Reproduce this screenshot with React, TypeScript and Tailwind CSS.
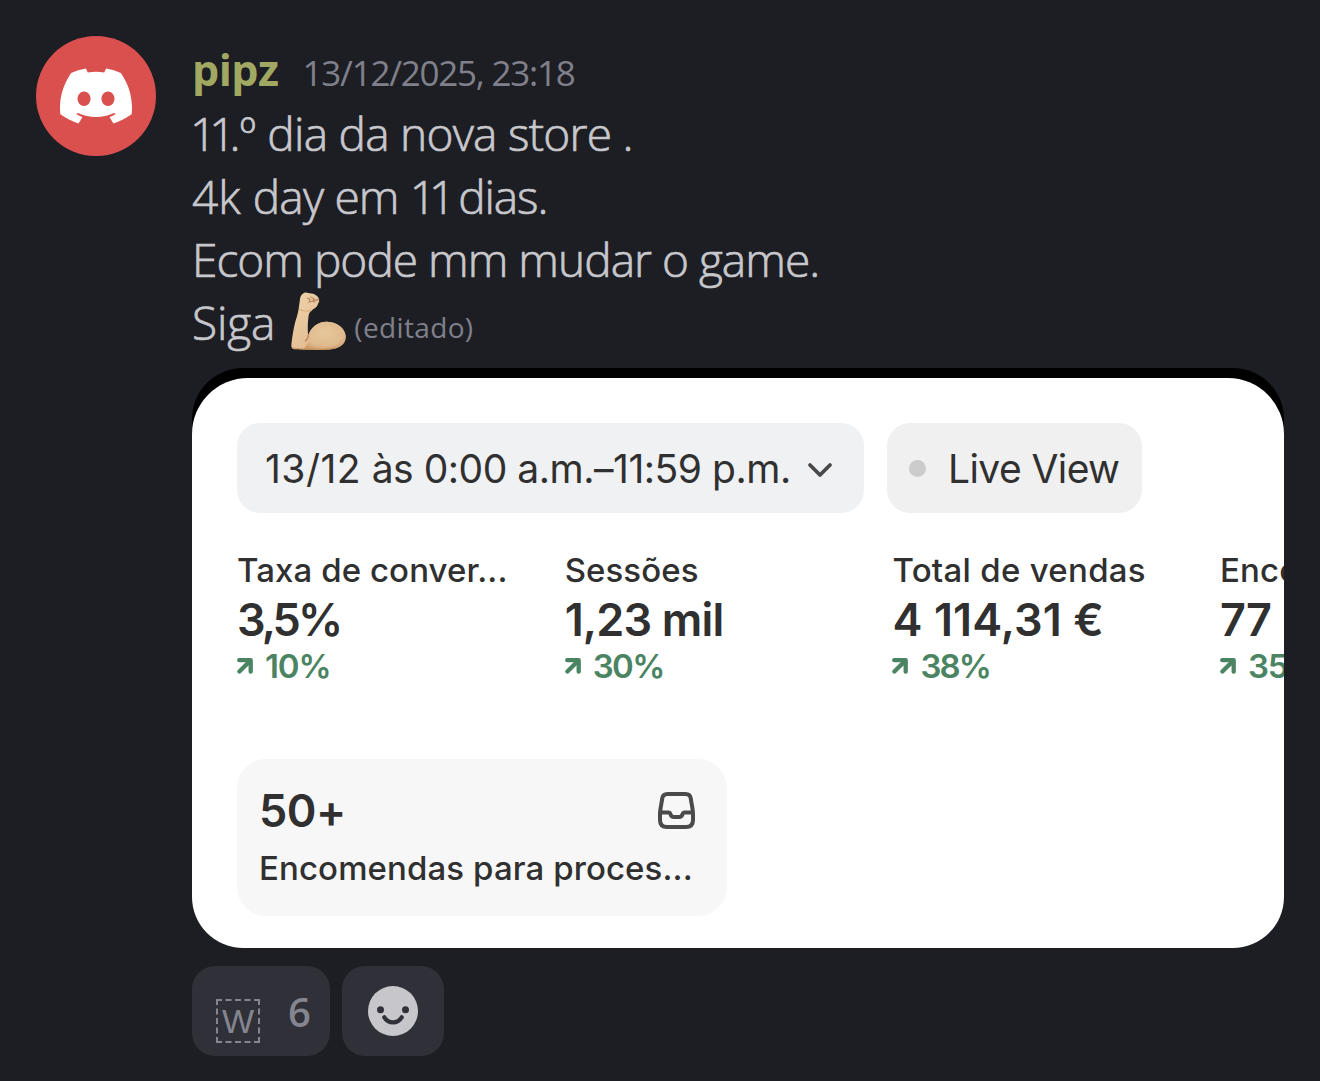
import React from "react";
import { SiDiscord } from "react-icons/si";

type Stat = { label: string; value: string; change: string; labelClass: string; valueClass: string; changeClass: string };

const stats: Stat[] = [
  { label: "Taxa de conver...", value: "3,5%", change: "10%", labelClass: "tracking-[0.08px]", valueClass: "tracking-[-3px]", changeClass: "tracking-[-1.1px]" },
  { label: "Sessões", value: "1,23 mil", change: "30%", labelClass: "tracking-[0.07px]", valueClass: "tracking-[-0.85px]", changeClass: "tracking-[-1.6px]" },
  { label: "Total de vendas", value: "4 114,31 €", change: "38%", labelClass: "tracking-[0.29px]", valueClass: "tracking-[0.1px]", changeClass: "tracking-[-1.9px]" },
  { label: "Encomendas", value: "77", change: "35%", labelClass: "tracking-[0.1px]", valueClass: "tracking-[-0.8px]", changeClass: "tracking-[-1.4px]" },
];

function Avatar() {
  return (
    <div className="flex size-[120px] shrink-0 items-center justify-center rounded-full bg-[#da504e]">
      <SiDiscord size={72} color="#ffffff" />
    </div>
  );
}

function FlexedArm() {
  return (
    <svg className="ml-[16px] mt-px h-[58px] w-[55px] shrink-0" viewBox="35 21 164 174" preserveAspectRatio="none">
      <defs>
        <linearGradient id="skin" x1="0" y1="0" x2="1" y2="1">
          <stop offset="0" stopColor="#f0d3aa" />
          <stop offset="0.6" stopColor="#e3be94" />
          <stop offset="1" stopColor="#d4a26f" />
        </linearGradient>
        <radialGradient id="biceps" cx="0.5" cy="0.4" r="0.65">
          <stop offset="0" stopColor="#e8c69b" />
          <stop offset="0.7" stopColor="#e0ba8f" />
          <stop offset="1" stopColor="#cd9b69" />
        </radialGradient>
      </defs>
      <path
        d="M62 41 C64 29 74 21 82 23 L91 25 C103 25 118 34 119 44 C120 51 116 54 115 58 C114 66 103 71 97 77 C90 80 88 87 87 96 C84 118 85 137 86 151 C95 126 116 109 143 110 C174 111 196 130 198 153 C199 176 183 187 160 192 C134 196 70 195 45 193 C37 192 36 188 36 181 C38 162 43 121 53 94 C57 80 59 64 62 41 Z"
        fill="url(#skin)"
      />
      <path
        d="M87 151 C95 126 116 109 143 110 C174 111 196 130 198 153 C199 176 183 187 160 192 C140 195 100 195 70 194 C84 180 92 168 87 151 Z"
        fill="url(#biceps)"
      />
      <path d="M86 150 C87 158 84 163 78 168" fill="none" stroke="#bb8350" strokeWidth="3.5" strokeLinecap="round" />
      <path d="M38 188 C60 193 140 196 170 188" fill="none" stroke="#c2793e" strokeOpacity="0.6" strokeWidth="3" />
      <path d="M60 72 C70 80 86 80 97 75" fill="none" stroke="#c99a68" strokeOpacity="0.6" strokeWidth="3" />
      <path d="M84 40 L92 42 L90 48 M94 36 L104 41 L101 46 L112 45 M88 52 L98 48 L106 51 M112 45 L118 44" fill="none" stroke="#8c5a33" strokeOpacity="0.8" strokeWidth="2.6" strokeLinecap="round" strokeLinejoin="round" />
    </svg>
  );
}

function TrendArrow() {
  return (
    <svg className="size-4 shrink-0" viewBox="0 0 16 16" fill="none" stroke="#4b8462" strokeLinecap="round" strokeLinejoin="round">
      <path d="M2.200 2.200H13.700V13.700" strokeWidth="4.300" />
      <path d="M12.500 3.400L2.400 13.500" strokeWidth="4.300" />
    </svg>
  );
}

function StatColumn({ stat }: { stat: Stat }) {
  return (
    <div className="w-[327.7px] shrink-0 whitespace-pre">
      <div className={`text-[33px] font-medium leading-[43px] ${stat.labelClass}`}>{stat.label}</div>
      <div className={`text-[45px] font-semibold leading-[56px] ${stat.valueClass}`}>{stat.value}</div>
      <div className="flex h-[35px] items-center gap-3 text-[#4b8462]">
        <TrendArrow />
        <span className={`pt-px text-[33px] font-semibold leading-[35px] ${stat.changeClass}`}>{stat.change}</span>
      </div>
    </div>
  );
}

function Attachment() {
  return (
    <div className="mt-4 h-[580px] w-[1092px] overflow-hidden rounded-[51px] bg-black font-['Inter',sans-serif] text-[#303030]">
      <div className="mt-[10px] h-[570px] rounded-t-[56px] bg-white pl-[45px] pt-[45px]">
        <div className="flex gap-[23px]">
          <div className="flex h-[90px] w-[627px] items-center rounded-[23px] bg-[#f0f1f3] pl-7">
            <span className="whitespace-nowrap pt-0.5 text-[39px] tracking-[-0.47px]">
              <span className="tracking-[0.5px]">13/12</span> às 0:00 a.m.–11:59 p.m.
            </span>
            <svg className="ml-4 mt-[3px] h-4 w-[26px]" viewBox="0 0 26 16" fill="none" stroke="#4a4a4a" strokeWidth="3.8" strokeLinecap="round" strokeLinejoin="round">
              <path d="M3 3L13 13L23 3" />
            </svg>
          </div>
          <div className="flex h-[90px] w-[255px] items-center rounded-[23px] bg-[#f0f0f0] pl-[22px]">
            <span className="size-[17px] rounded-full bg-[#cccccc]" />
            <span className="ml-[22px] whitespace-nowrap pt-0.5 text-[39px] tracking-[-0.58px]">Live View</span>
          </div>
        </div>
        <div className="mt-9 flex">
          {stats.map((s) => (
            <StatColumn key={s.label} stat={s} />
          ))}
        </div>
        <div className="mt-[76px] h-[157px] w-[490px] rounded-[29px] bg-[#f7f7f7] pl-[22px] pr-8 pt-[22px]">
          <div className="flex items-center justify-between">
            <span className="pt-px text-[45px] font-semibold leading-[58px] tracking-[-0.5px]">50+</span>
            <svg className="mb-px h-[37px] w-[37px]" viewBox="0 0 37 37" fill="none" stroke="#4a4a4a" strokeWidth="4" strokeLinejoin="round">
              <path d="M9.5 2H27.5C30.5 2 32.4 3.8 32.8 6.6C33.8 13.5 35 18 35 22V28C35 32.5 32.5 35 28 35H9C4.500 35 2 32.500 2 28V22C2 18 3.200 13.500 4.200 6.600C4.600 3.800 6.500 2 9.500 2Z" />
              <path d="M2.500 20.500H10.200C12 20.500 12.200 21.300 12.700 22.600C13.200 24.100 13.900 25 15.600 25H21.400C23.100 25 23.800 24.100 24.300 22.600C24.800 21.300 25 20.500 26.800 20.500H34.500" />
            </svg>
          </div>
          <div className="whitespace-nowrap text-[33px] font-medium leading-[57px] tracking-[0.1px]">Encomendas para proces...</div>
        </div>
      </div>
    </div>
  );
}

function Reactions() {
  return (
    <div className="mt-[18px] flex gap-3">
      <div className="flex h-[90px] w-[138px] rounded-[23px] bg-[#303038] pl-6">
        <div className="mt-[33px] flex size-11 items-center justify-center border-2 border-dashed border-[#85858f] font-['Liberation_Sans',sans-serif] text-[34px] leading-none text-[#85858f]">
          W
        </div>
        <span className="ml-7 text-[40px] font-semibold leading-[92px] text-[#85858f]">6</span>
      </div>
      <div className="flex h-[90px] w-[102px] items-center justify-center rounded-[23px] bg-[#303038]">
        <svg className="size-[50px]" viewBox="0 0 50 50">
          <circle cx="25" cy="25" r="25" fill="#c6c6cb" />
          <circle cx="12.500" cy="23.700" r="3.500" fill="#303038" />
          <circle cx="37.500" cy="23.700" r="3.500" fill="#303038" />
          <path d="M16.300 31.300C20.500 38 29.500 38 33.700 31.300" fill="none" stroke="#303038" strokeWidth="4.200" strokeLinecap="round" />
        </svg>
      </div>
    </div>
  );
}

export default function App() {
  return (
    <main className="flex h-[1081px] w-[1320px] items-start overflow-hidden bg-[#1d1e23] pl-9 pt-9 font-['Open_Sans',sans-serif]">
      <Avatar />
      <div className="ml-9 w-[1092px]">
        <div className="flex h-[66px] items-baseline whitespace-nowrap pt-0.5">
          <span className="text-[43px] font-bold leading-[64px] tracking-[-0.5px] text-[#a1a862]">pipz</span>
          <span className="ml-6 text-[35px] leading-[64px] tracking-[-1.25px] text-[#80808c]">13/12/2025, 23:18</span>
        </div>
        <div className="h-[250px] whitespace-nowrap text-[46px] font-light leading-[63px] text-[#c7c7cc] [-webkit-text-stroke:0.7px_#c7c7cc]">
          <p>
            <span className="-ml-[2px] tracking-[-7px]">1</span>
            <span className="tracking-[-6px]">1</span>
            <span className="tracking-[-1px]">.º</span>
            <span className="ml-[1px] tracking-[-0.73px]"> dia da nova store .</span>
          </p>
          <p className="tracking-[-0.8px]">
            <span className="tracking-[0.1px]">4k </span>day em <span className="tracking-[-7px]">1</span>
            <span className="tracking-[-4px]">1</span>
            <span className="-ml-[4px] tracking-[-1.1px]"> dias.</span>
          </p>
          <p className="tracking-[-0.97px]">Ecom pode mm mudar o game.</p>
          <div className="flex h-[61px]">
            <span className="tracking-[-0.1px]">Siga</span>
            <FlexedArm />
            <span className="ml-[8px] mt-[5px] text-[28px] font-normal tracking-[0.35px] text-[#80808c] [-webkit-text-stroke:0px]">(editado)</span>
          </div>
        </div>
        <Attachment />
        <Reactions />
      </div>
    </main>
  );
}
